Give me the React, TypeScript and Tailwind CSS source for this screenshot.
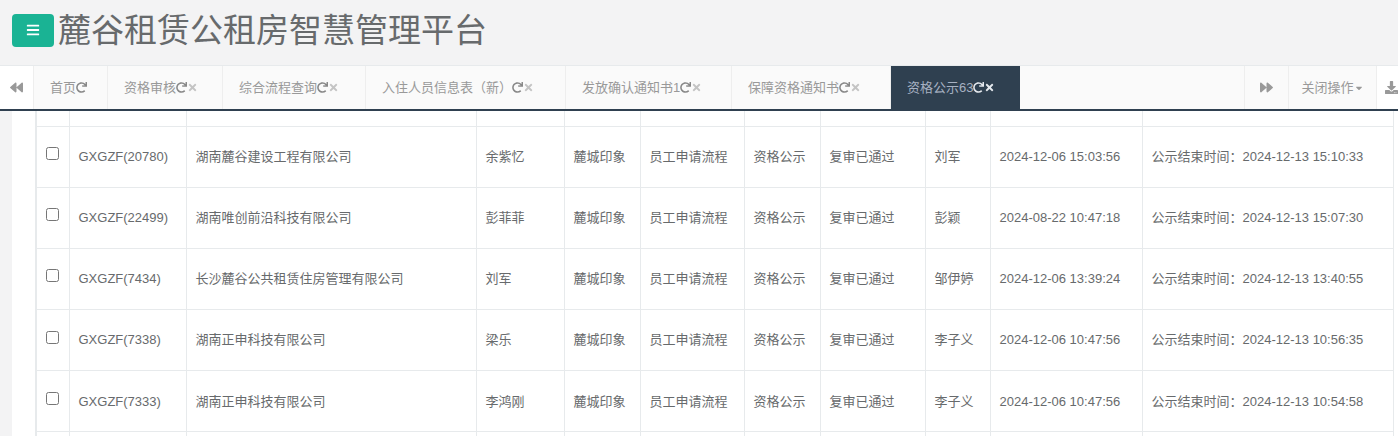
import { FaBackward, FaForward, FaRedo, FaTimes, FaDownload, FaBars, FaCaretDown } from "react-icons/fa";

const font = { fontFamily: '"Liberation Sans", "Noto Sans CJK SC", sans-serif' };

const tabs = [
  { t: "首页", w: "w-[74px]", x: false },
  { t: "资格审核", w: "w-[115px]", x: true },
  { t: "综合流程查询", w: "w-[143px]", x: true },
  { t: "入住人员信息表（新）", w: "w-[200px]", x: true },
  { t: "发放确认通知书1", w: "w-[166px]", x: true },
  { t: "保障资格通知书", w: "w-[159px]", x: true },
];

const widths = ["w-[33px]", "w-[117px]", "w-[290px]", "w-[88px]", "w-[76px]", "w-[104px]", "w-[76px]", "w-[105px]", "w-[65px]", "w-[152px]", "w-[251px]"];

const rows = [
  ["GXGZF(20780)", "湖南麓谷建设工程有限公司", "余紫忆", "刘军", "2024-12-06 15:03:56", "2024-12-13 15:10:33"],
  ["GXGZF(22499)", "湖南唯创前沿科技有限公司", "彭菲菲", "彭颖", "2024-08-22 10:47:18", "2024-12-13 15:07:30"],
  ["GXGZF(7434)", "长沙麓谷公共租赁住房管理有限公司", "刘军", "邹伊婷", "2024-12-06 13:39:24", "2024-12-13 13:40:55"],
  ["GXGZF(7338)", "湖南正申科技有限公司", "梁乐", "李子义", "2024-12-06 10:47:56", "2024-12-13 10:56:35"],
  ["GXGZF(7333)", "湖南正申科技有限公司", "李鸿刚", "李子义", "2024-12-06 10:47:56", "2024-12-13 10:54:58"],
];

const cell = "border border-[#e7eaec] px-[9px] align-middle whitespace-nowrap";

function Row({ r, h }: { r: string[]; h: string }) {
  return (
    <tr className={h}>
      <td className={cell}>
        <input type="checkbox" className="block -mt-[6px] w-[13px] h-[13px]" />
      </td>
      <td className={cell}>{r[0]}</td>
      <td className={cell}>{r[1]}</td>
      <td className={cell}>{r[2]}</td>
      <td className={cell}>麓城印象</td>
      <td className={cell}>员工申请流程</td>
      <td className={cell}>资格公示</td>
      <td className={cell}>复审已通过</td>
      <td className={cell}>{r[3]}</td>
      <td className={cell}>{r[4]}</td>
      <td className={cell}>公示结束时间：{r[5]}</td>
    </tr>
  );
}

export default function App() {
  return (
    <div style={font} className="w-[1398px] h-[436px] overflow-hidden bg-[#f3f3f4] text-[13px] text-[#676a6c] flex flex-col">
      <header className="h-[65px] shrink-0 flex items-center pl-3 pb-[5px]">
        <button className="w-[42px] h-[33px] rounded-[4px] bg-[#1ab394] text-white flex items-center justify-center">
          <FaBars className="text-[14px]" />
        </button>
        <h1 className="ml-1 text-[33px] leading-none font-normal text-[#676a6c]">麓谷租赁公租房智慧管理平台</h1>
      </header>

      <nav className="h-[46px] shrink-0 bg-[#fafafa] border-t border-[#e7eaec] border-b-2 border-b-[#2f4050] flex text-[#999]">
        <button className="w-[34px] bg-white border-r border-[#eeeeee] flex items-center justify-center">
          <FaBackward className="text-[13px]" />
        </button>
        {tabs.map((t) => (
          <div key={t.t} className={`${t.w} border-r border-[#eeeeee] pl-4 flex items-center whitespace-nowrap`}>
            {t.t}
            <FaRedo className="text-[11px] text-[#888]" />
            {t.x && <FaTimes className="text-[11px] text-[#c4c4c4]" />}
          </div>
        ))}
        <div className="w-[129px] bg-[#2f4050] text-[#a7b1c2] pl-4 flex items-center whitespace-nowrap">
          资格公示63
          <FaRedo className="text-[11px] text-[#e5e9ee]" />
          <FaTimes className="text-[11px] text-[#e5e9ee]" />
        </div>
        <div className="flex-1" />
        <button className="w-[44px] border-l border-[#eeeeee] flex items-center justify-center">
          <FaForward className="text-[13px]" />
        </button>
        <button className="w-[88px] border-l border-[#eeeeee] flex items-center justify-center">
          关闭操作
          <FaCaretDown className="text-[10px]" />
        </button>
        <button className="flex-1 max-w-[22px] border-l border-[#eeeeee] bg-white pl-2 flex items-center overflow-hidden">
          <FaDownload className="text-[13px] shrink-0" />
        </button>
      </nav>

      <main className="flex-1 min-h-0 ml-3 bg-white pl-[23px] overflow-hidden">
        <table className="table-fixed border-collapse w-[1357px] border-l-2 border-[#e7eaec]">
          <colgroup>
            {widths.map((w, i) => (
              <col key={i} className={w} />
            ))}
          </colgroup>
          <tbody>
            <tr className="h-[15px]">
              {widths.map((_, i) => (
                <td key={i} className="border border-t-0 border-[#e7eaec]" />
              ))}
            </tr>
            {rows.map((r) => (
              <Row key={r[0]} r={r} h="h-[61.2px]" />
            ))}
            <tr className="h-[30px]">
              {widths.map((_, i) => (
                <td key={i} className="border border-[#e7eaec]" />
              ))}
            </tr>
          </tbody>
        </table>
      </main>
    </div>
  );
}
